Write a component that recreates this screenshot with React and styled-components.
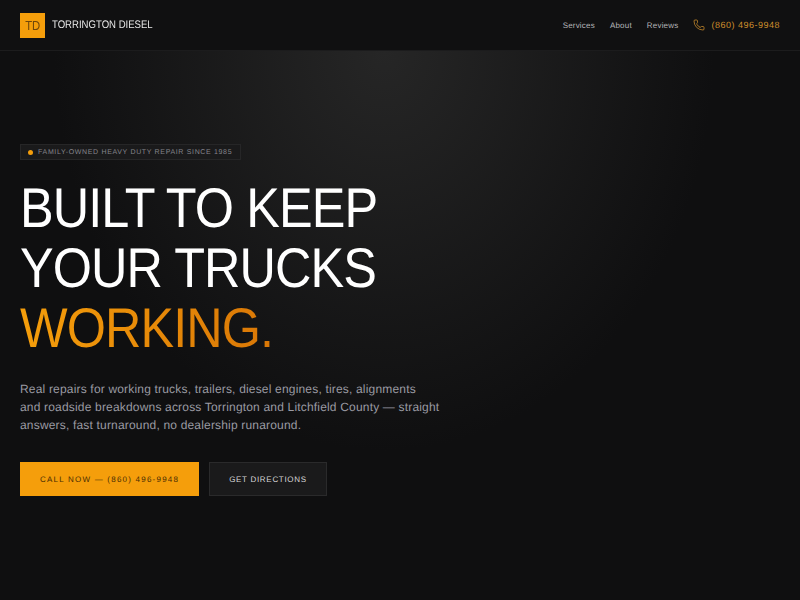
import React from 'react';
import styled, { createGlobalStyle } from 'styled-components';
import { Phone } from 'lucide-react';

const Global = createGlobalStyle`
  html, body { margin: 0; padding: 0; background: #0f0f10; }
  * { box-sizing: border-box; }
`;
const Page = styled.div`
  width: 800px; height: 600px; overflow: hidden; background: #0f0f10;
  display: flex; flex-direction: column; font-family: "Liberation Sans", sans-serif;
  text-rendering: geometricPrecision;
`;
const Header = styled.header`
  height: 51px; flex: none; padding: 0 20px; display: flex; align-items: center; justify-content: space-between;
  border-bottom: 1px solid #1c1c1d; background: #101011;
`;
const Brand = styled.div`display: flex; align-items: center; gap: 7px;`;
const Logo = styled.div`
  width: 25px; height: 25px; background: #f59e0b; color: #70470a; display: flex; align-items: center; justify-content: center;
  font-size: 13px;
`;
const LogoText = styled.span`display: block; transform: scaleX(0.87);`;
const BrandName = styled.span`
  font-size: 11px; color: #e8e8e8; transform: scaleX(0.87); transform-origin: left center;
`;
const Nav = styled.nav`display: flex; align-items: center; gap: 15px;`;
const NavLink = styled.a`font-size: 8px; color: #b4b4b8; letter-spacing: 0.2px;`;
const PhoneLink = styled.a`
  display: flex; align-items: center; gap: 6px; font-size: 9px; color: #cf8f2c; letter-spacing: 0.5px;
`;
const Hero = styled.main`
  flex: 1; padding: 93px 20px 0;
  background: radial-gradient(ellipse 330px 400px at 48% 0, #262626 0%, #0f0f10 100%);
`;
const Badge = styled.div`
  display: flex; width: fit-content; align-items: center; gap: 5px; height: 16px; padding: 0 8px 0 7px;
  background: #1a1a1b; border: 1px solid #262627;
  font-size: 7px; letter-spacing: 0.66px; color: #85858b;
`;
const Dot = styled.span`width: 5px; height: 5px; border-radius: 50%; background: #f59e0b;`;
const Title = styled.h1`
  margin: 18px 0 0; font-size: 56px; font-weight: 400; line-height: 60px; color: #fff;
  letter-spacing: -1px;
  transform: scaleX(0.9); transform-origin: left center;
`;
const Accent = styled.span`
  display: block; width: fit-content;
  background: linear-gradient(90deg, #f59e0b, #d97706); -webkit-background-clip: text; background-clip: text; color: transparent;
`;
const Lead = styled.p`
  margin: 22px 0 0; font-size: 12px; line-height: 18px; color: #9a9aa2; letter-spacing: 0.18px;
`;
const Actions = styled.div`display: flex; gap: 10px; margin-top: 28px;`;
const Button = styled.a`
  height: 34px; display: flex; align-items: center; justify-content: center;
  font-size: 8px; letter-spacing: ${p => p.$primary ? '1.22px' : '0.7px'}; padding: 0 19px;
  background: ${p => p.$primary ? '#f59e0b' : '#1a1a1b'};
  color: ${p => p.$primary ? '#4a2d03' : '#d8d8d8'};
  border: 1px solid ${p => p.$primary ? '#f59e0b' : '#2a2a2b'};
`;

export default function App() {
  return (
    <Page>
      <Global />
      <Header>
        <Brand><Logo><LogoText>TD</LogoText></Logo><BrandName>TORRINGTON DIESEL</BrandName></Brand>
        <Nav>
          <NavLink>Services</NavLink>
          <NavLink>About</NavLink>
          <NavLink>Reviews</NavLink>
          <PhoneLink><Phone size={12} strokeWidth={1.5} />(860) 496-9948</PhoneLink>
        </Nav>
      </Header>
      <Hero>
        <Badge><Dot />FAMILY-OWNED HEAVY DUTY REPAIR SINCE 1985</Badge>
        <Title>BUILT TO KEEP<br />YOUR TRUCKS<Accent>WORKING.</Accent></Title>
        <Lead>Real repairs for working trucks, trailers, diesel engines, tires, alignments<br />and roadside breakdowns across Torrington and Litchfield County — straight<br />answers, fast turnaround, no dealership runaround.</Lead>
        <Actions>
          <Button $primary>CALL NOW — (860) 496-9948</Button>
          <Button>GET DIRECTIONS</Button>
        </Actions>
      </Hero>
    </Page>
  );
}
